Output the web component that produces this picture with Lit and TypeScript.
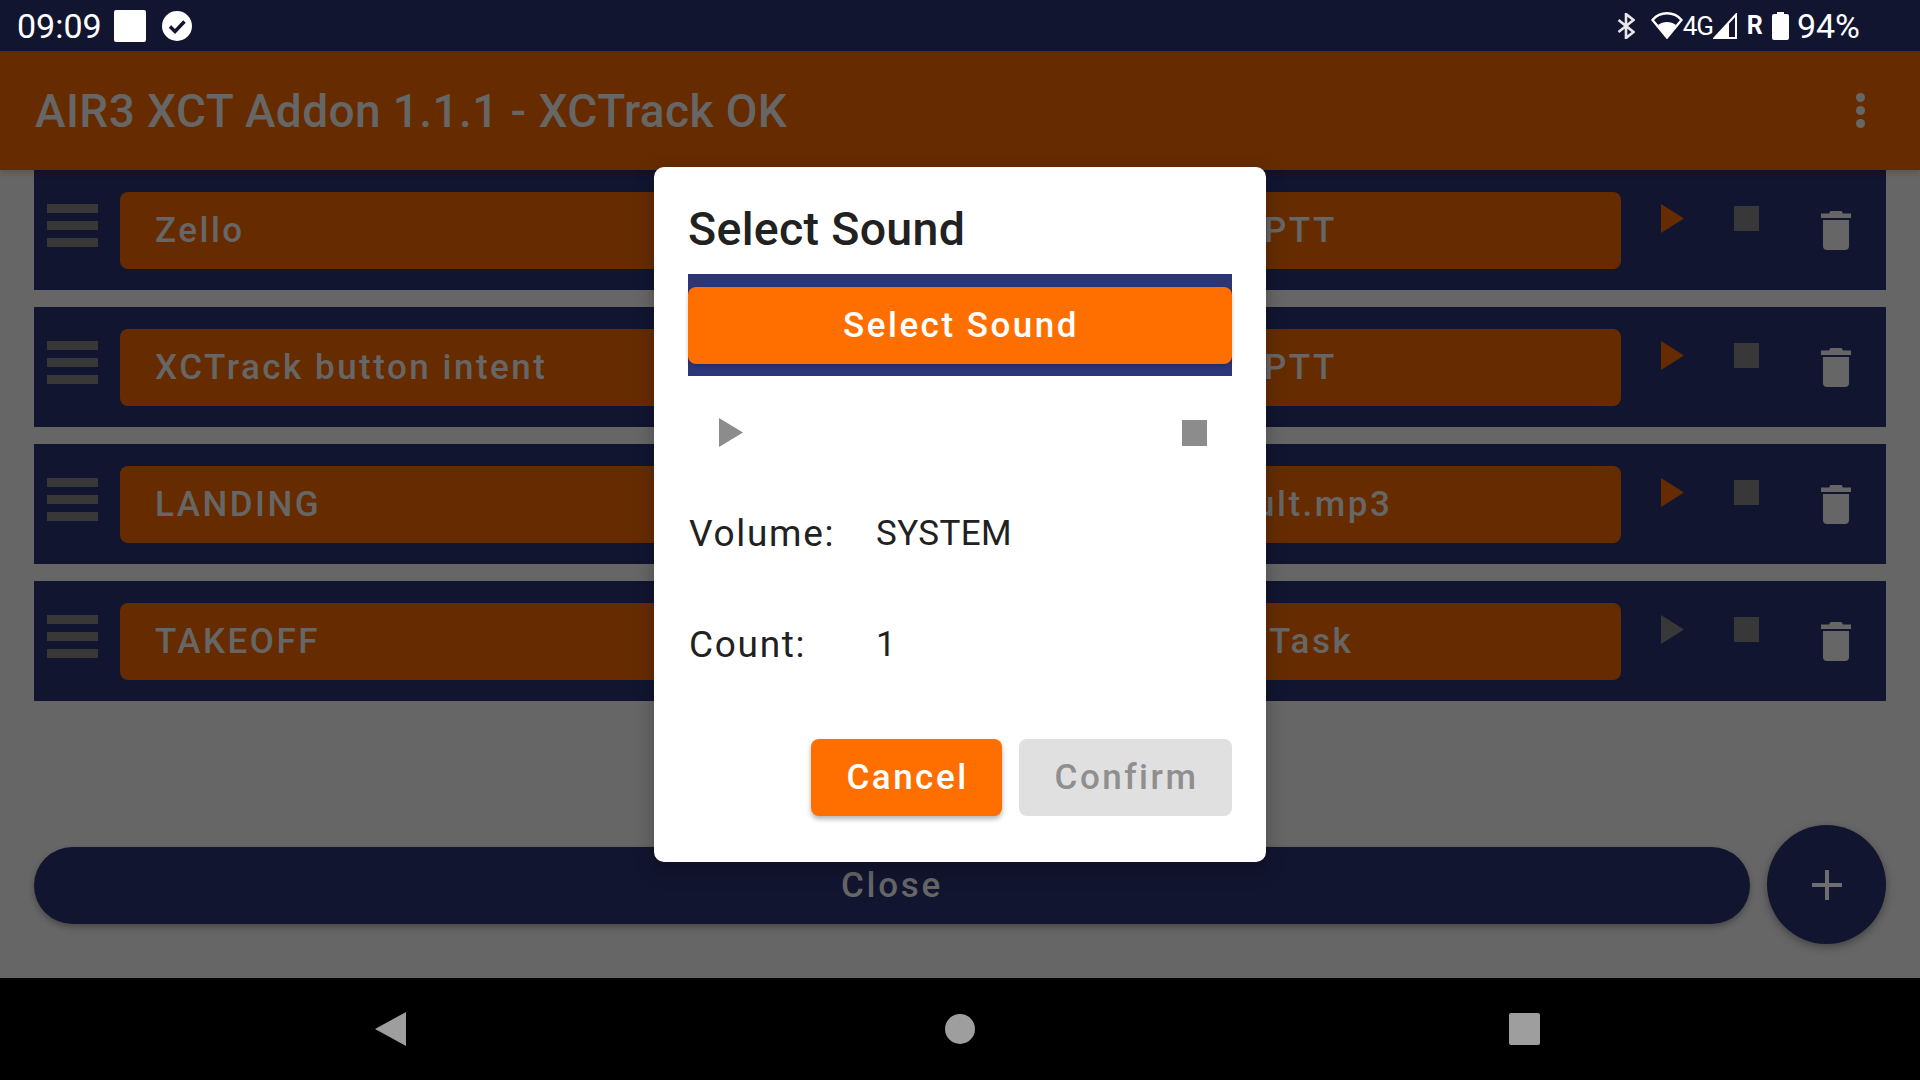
import { LitElement, html, css } from "lit";
import { customElement } from "lit/decorators.js";

const rows = [
  { left: "Zello", right: "PTT", offset: 394, play: "#662c00" },
  { left: "XCTrack button intent", right: "PTT", offset: 394, play: "#662c00" },
  { left: "LANDING", right: "ult.mp3", offset: 385, play: "#662c00" },
  { left: "TAKEOFF", right: "Task", offset: 399, play: "#383838" },
];

@customElement("app-root")
export class AppRoot extends LitElement {
  static styles = css`
    :host { display: block; width: 1920px; height: 1080px; position: relative; overflow: hidden;
      background: #666; font-family: Roboto, "Noto Sans", sans-serif; }
    .page { display: flex; flex-direction: column; height: 1080px; }
    .status { height: 51px; flex: none; background: #121530; color: #fff; display: flex; align-items: center; padding: 0 60px 0 17px; }
    .time { font-size: 34px; margin-right: 12px; }
    .white-sq { width: 32px; height: 32px; background: #fff; border-radius: 2px; margin-right: 16px; }
    .check { width: 30px; height: 30px; }
    .spacer { flex: 1; }
    .sicons { display: flex; align-items: center; }
    .bt { margin-right: 16px; }
    .pct { font-size: 34px; margin-left: 8px; }
    .g4 { font-size: 26px; line-height: 1; letter-spacing: -1.2px; width: 26px; }
    .sig { margin-left: 4px; }
    .r { font-size: 25px; font-weight: 700; margin: 0 9px 0 10px; line-height: 1; }
    .appbar { height: 119px; flex: none; background: #662c00; color: #666; display: flex; align-items: center; padding: 0 34px 0 35px; justify-content: space-between; box-shadow: 0 3px 6px rgba(0,0,0,.15); z-index: 1; }
    .apptitle { font-size: 46px; font-weight: 500; letter-spacing: .4px; }
    .dots { display: flex; flex-direction: column; gap: 4px; margin-right: 21px; }
    .dots i { width: 9px; height: 9px; border-radius: 50%; background: #666; display: block; }
    .list { flex: none; display: flex; flex-direction: column; gap: 17px; padding: 0 34px; }
    .row { height: 120px; background: #121530; display: flex; align-items: stretch; padding: 0 0 0 13px; }
    .handle { width: 51px; flex: none; display: flex; flex-direction: column; gap: 8px; margin: 34px 22px 0 0; }
    .handle i { height: 9px; background: #383838; display: block; }
    .btn { height: 77px; margin-top: 22px; background: #662c00; color: #666; border-radius: 8px; font-size: 35px; font-weight: 500; letter-spacing: 2.5px; display: flex; align-items: center; box-sizing: border-box; white-space: nowrap; }
    .btn.l { width: 740px; padding-left: 35px; margin-right: 10px; }
    .btn.r2 { width: 751px; }
    .ctrl { width: 265px; flex: none; display: flex; }
    .ctrl svg { display: block; flex: none; }
    .ctrl .play { margin: 34px 0 0 40px; }
    .ctrl .stop { margin: 36px 0 0 50px; }
    .ctrl .trash { margin: 41px 0 0 62px; }
    .bottom { flex: 1; display: flex; align-items: flex-start; padding: 124px 34px 0; gap: 17px; }
    .close { flex: 1; height: 77px; margin-top: 22px; border-radius: 39px; background: #121530; color: #666; font-size: 35px; font-weight: 500; letter-spacing: 2.7px; display: flex; align-items: center; justify-content: center; box-shadow: 0 3px 6px rgba(0,0,0,.3); }
    .fab { width: 119px; height: 119px; border-radius: 50%; background: #121530; display: flex; align-items: center; justify-content: center; box-shadow: 0 3px 8px rgba(0,0,0,.35); flex: none; }
    .nav { height: 102px; flex: none; background: #000; display: flex; justify-content: center; }
    .dialog { position: absolute; z-index: 2; left: 654px; top: 167px; width: 612px; height: 695px; box-sizing: border-box; background: #fff; border-radius: 10px; padding: 0 34px; box-shadow: 0 8px 20px rgba(0,0,0,.25); display: flex; flex-direction: column; color: #212121; }
    .dtitle { font-size: 46.5px; font-weight: 500; height: 107px; line-height: 124px; letter-spacing: .3px; flex: none; }
    .pick { background: #2c3578; height: 102px; padding-top: 13px; box-sizing: border-box; flex: none; }
    .pbtn { height: 77px; padding-left: 2px; border-radius: 8px; background: #ff6f00; color: #fff; font-size: 35px; font-weight: 500; letter-spacing: 2.5px; display: flex; align-items: center; justify-content: center; box-shadow: 0 2px 4px rgba(0,0,0,.2); }
    .pctl { display: flex; justify-content: space-between; align-items: center; height: 29px; margin-top: 42px; padding: 0 25px 0 31px; flex: none; }
    .field { display: flex; font-size: 35px; letter-spacing: .4px; line-height: 41px; flex: none; padding-left: 1px; }
    .field.vol { margin-top: 66px; }
    .field.cnt { margin-top: 70px; }
    .field .k { width: 187px; font-size: 37px; letter-spacing: 1.7px; }
    .acts { display: flex; justify-content: flex-end; gap: 17px; margin-top: 74px; flex: none; }
    .ab { height: 77px; padding-left: 2px; box-sizing: border-box; border-radius: 8px; font-size: 35px; font-weight: 500; letter-spacing: 2.5px; display: flex; align-items: center; justify-content: center; }
    .cancel { width: 191px; background: #ff6f00; color: #fff; box-shadow: 0 3px 5px rgba(0,0,0,.3); }
    .confirm { width: 213px; background: #e0e0e0; color: #8f8f8f; }
  `;

  render() {
    return html`
      <div class="page">
        <div class="status">
          <span class="time">09:09</span>
          <span class="white-sq"></span>
          <svg class="check" viewBox="0 0 30 30"><circle cx="15" cy="15" r="15" fill="#fff"/><path d="M8 15.5l5 5 9.5-10" fill="none" stroke="#121530" stroke-width="3.4"/></svg>
          <span class="spacer"></span>
          <div class="sicons">
            <svg class="bt" width="18" height="26" viewBox="0 0 18 26"><path d="M1.5 7l15 12-7.500 6V1l7.500 6-15 12" fill="none" stroke="#e8e8ea" stroke-width="2.6"/></svg>
            <svg width="32" height="27" viewBox="0 0 32 27"><path d="M1.500 8C9-1 23-1 30.500 8L16 25.500z" fill="none" stroke="#fff" stroke-width="2.4"/><path d="M7 13c5-4 13-4 18 0L16 26z" fill="#fff"/></svg>
            <span class="g4">4G</span>
            <svg class="sig" width="24" height="26" viewBox="0 0 24 26"><path d="M1.500 25L23 1.500V25z" fill="none" stroke="#fff" stroke-width="2"/><path d="M1 26l15-16v16z" fill="#fff"/></svg>
            <span class="r">R</span>
            <svg width="17" height="28" viewBox="0 0 17 28"><path d="M5 0h7v2h3q2 0 2 2v22q0 2-2 2H2q-2 0-2-2V4q0-2 2-2h3z" fill="#fff"/></svg>
            <span class="pct">94%</span>
          </div>
        </div>
        <div class="appbar"><span class="apptitle">AIR3 XCT Addon 1.1.1 - XCTrack OK</span><span class="dots"><i></i><i></i><i></i></span></div>
        <div class="list">
          ${rows.map((r) => html`
            <div class="row">
              <div class="handle"><i></i><i></i><i></i></div>
              <div class="btn l">${r.left}</div>
              <div class="btn r2"><span style="margin-left:${r.offset}px">${r.right}</span></div>
              <div class="ctrl">
                <svg class="play" width="23" height="29" viewBox="0 0 23 29"><path d="M0 0l23 14.500L0 29z" fill="${r.play}"/></svg>
                <svg class="stop" width="25" height="25" viewBox="0 0 25 25"><rect width="25" height="25" fill="#383838"/></svg>
                <svg class="trash" width="30" height="39" viewBox="0 0 30 39"><path d="M0 2.500h8l1.500-2.500h11L22 2.500h8V7H0zM2 9h26v26q0 4-4 4H6q-4 0-4-4z" fill="#666"/></svg>
              </div>
            </div>`)}
        </div>
        <div class="bottom">
          <div class="close">Close</div>
          <div class="fab"><svg width="30" height="30" viewBox="0 0 30 30"><path d="M13 0h4v13h13v4H17v13h-4V17H0v-4h13z" fill="#6e6e6e"/></svg></div>
        </div>
        <div class="nav">
          <svg width="1920" height="102" viewBox="0 0 1920 102">
            <path d="M406 34v34L375 51z" fill="#9e9e9e"/>
            <circle cx="960" cy="51" r="15" fill="#9e9e9e"/>
            <rect x="1509" y="35" width="31" height="32" rx="2" fill="#9e9e9e"/>
          </svg>
        </div>
      </div>
      <div class="dialog">
        <div class="dtitle">Select Sound</div>
        <div class="pick"><div class="pbtn">Select Sound</div></div>
        <div class="pctl">
          <svg width="24" height="29" viewBox="0 0 24 29"><path d="M0 0l24 14.500L0 29z" fill="#8c8c8c"/></svg>
          <svg width="25" height="26" viewBox="0 0 25 26"><rect width="25" height="26" fill="#8c8c8c"/></svg>
        </div>
        <div class="field vol"><span class="k">Volume:</span><span>SYSTEM</span></div>
        <div class="field cnt"><span class="k">Count:</span><span>1</span></div>
        <div class="acts"><div class="ab cancel">Cancel</div><div class="ab confirm">Confirm</div></div>
      </div>
    `;
  }
}
